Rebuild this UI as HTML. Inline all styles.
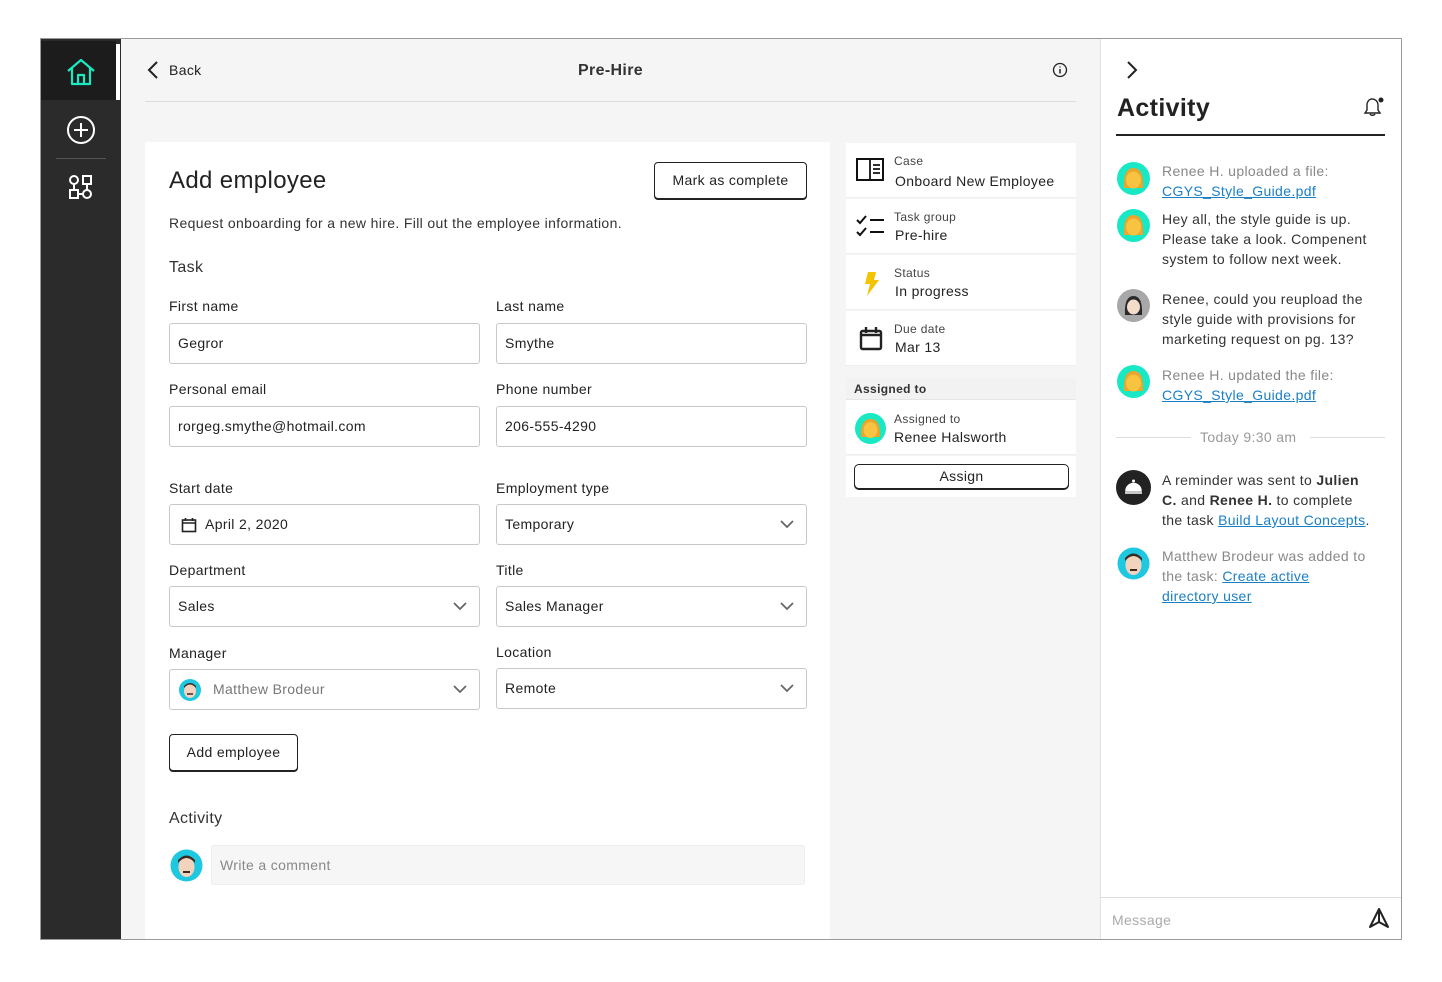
<!DOCTYPE html>
<html><head><meta charset="utf-8"><style>
*{box-sizing:border-box;margin:0;padding:0}
body{width:1442px;height:982px;background:#fff;font-family:"Liberation Sans",sans-serif;color:#222;position:relative;overflow:hidden;font-size:14px;letter-spacing:0.35px}
.a{position:absolute}
.frame{left:40px;top:38px;width:1362px;height:902px;border:1px solid #9a9a9a;background:#f5f5f5;overflow:hidden}
.lbl{font-size:14px;color:#222}
.inp{height:41px;border:1px solid #c8c8c8;border-radius:3px;background:#fff;font-size:14px;padding-left:8px;line-height:39px;color:#222}
.chev{position:absolute;right:12px;top:14px}
.btn{border:1.5px solid #222;border-radius:4px;background:#fff;font-size:14px;text-align:center;box-shadow:0 1px 0 #222}
.row{left:846px;width:230px;height:55px;background:#fff;border-bottom:1px solid #eee}
.small{font-size:12px;color:#444}
.val{font-size:14px;color:#222}
.msg{font-size:14px;line-height:20px;color:#333;width:222px}
.gray{color:#888}
.link{color:#1a7fc4;text-decoration:underline}
</style></head><body>
<div class="a frame"></div>
<!-- sidebar -->
<div class="a" style="left:41px;top:39px;width:80px;height:900px;background:#2b2b2b"></div>
<div class="a" style="left:41px;top:41px;width:75px;height:59px;background:#1c1c1c"></div>
<div class="a" style="left:116px;top:44px;width:4px;height:56px;background:#fff"></div>
<svg class="a" style="left:66px;top:58px" width="30" height="28" viewBox="0 0 30 28"><path d="M2 13 L15 2 L28 13 M6 10 V26 H24 V10 M12 26 V17 H18 V26" fill="none" stroke="#1de9c0" stroke-width="2.2" stroke-linejoin="round"/></svg>
<svg class="a" style="left:66px;top:115px" width="30" height="30"><circle cx="15" cy="15" r="13" fill="none" stroke="#fff" stroke-width="2"/><path d="M15 8v14M8 15h14" stroke="#fff" stroke-width="2"/></svg>
<div class="a" style="left:56px;top:158px;width:50px;height:1px;background:#555"></div>
<svg class="a" style="left:68px;top:174px" width="26" height="26"><circle cx="6" cy="6" r="4" fill="none" stroke="#fff" stroke-width="2"/><rect x="15" y="2" width="8" height="8" fill="none" stroke="#fff" stroke-width="2"/><rect x="2" y="16" width="8" height="8" fill="none" stroke="#fff" stroke-width="2"/><circle cx="19" cy="20" r="4" fill="none" stroke="#fff" stroke-width="2"/><path d="M6 10v6M10 20h5M19 10v6" stroke="#fff" stroke-width="2"/></svg>
<!-- header -->
<svg class="a" style="left:146px;top:60px" width="14" height="20"><path d="M11 2 L3 10 L11 18" fill="none" stroke="#222" stroke-width="2"/></svg>
<div class="a" style="left:169px;top:62px;font-size:14px">Back</div>
<div class="a" style="left:578px;top:62px;font-size:16px;font-weight:bold;color:#333">Pre-Hire</div>
<svg class="a" style="left:1052px;top:62px" width="16" height="16"><circle cx="8" cy="8" r="6.5" fill="none" stroke="#222" stroke-width="1.3"/><path d="M8 7v4.5M8 4.5v1" stroke="#222" stroke-width="1.5"/></svg>
<div class="a" style="left:145px;top:101px;width:931px;height:1px;background:#ddd"></div>
<!-- card -->
<div class="a" style="left:145px;top:142px;width:685px;height:797px;background:#fff"></div>
<div class="a" style="left:169px;top:167px;font-size:24px;color:#222">Add employee</div>
<div class="a btn" style="left:654px;top:162px;width:153px;height:37px;line-height:34px">Mark as complete</div>
<div class="a" style="left:169px;top:215px;font-size:14px;color:#333">Request onboarding for a new hire. Fill out the employee information.</div>
<div class="a" style="left:169px;top:259px;font-size:16px;color:#333">Task</div>
<div class="a lbl" style="left:169px;top:298px">First name</div>
<div class="a lbl" style="left:496px;top:298px">Last name</div>
<div class="a inp" style="left:169px;top:323px;width:311px">Gegror</div>
<div class="a inp" style="left:496px;top:323px;width:311px">Smythe</div>
<div class="a lbl" style="left:169px;top:381px">Personal email</div>
<div class="a lbl" style="left:496px;top:381px">Phone number</div>
<div class="a inp" style="left:169px;top:406px;width:311px">rorgeg.smythe@hotmail.com</div>
<div class="a inp" style="left:496px;top:406px;width:311px">206-555-4290</div>
<div class="a lbl" style="left:169px;top:480px">Start date</div>
<div class="a lbl" style="left:496px;top:480px">Employment type</div>
<div class="a inp" style="left:169px;top:504px;width:311px;padding-left:35px">April 2, 2020<svg class="a" style="left:11px;top:12px" width="16" height="16"><rect x="1.5" y="3" width="13" height="11.5" fill="none" stroke="#222" stroke-width="1.6"/><path d="M1.5 6h13M4.5 1v3M11.5 1v3" stroke="#222" stroke-width="1.6"/></svg></div>
<div class="a inp" style="left:496px;top:504px;width:311px">Temporary<svg class="chev" width="14" height="10"><path d="M1 2l6 6 6-6" fill="none" stroke="#666" stroke-width="1.8"/></svg></div>
<div class="a lbl" style="left:169px;top:562px">Department</div>
<div class="a lbl" style="left:496px;top:562px">Title</div>
<div class="a inp" style="left:169px;top:586px;width:311px">Sales<svg class="chev" width="14" height="10"><path d="M1 2l6 6 6-6" fill="none" stroke="#666" stroke-width="1.8"/></svg></div>
<div class="a inp" style="left:496px;top:586px;width:311px">Sales Manager<svg class="chev" width="14" height="10"><path d="M1 2l6 6 6-6" fill="none" stroke="#666" stroke-width="1.8"/></svg></div>
<div class="a lbl" style="left:169px;top:645px">Manager</div>
<div class="a lbl" style="left:496px;top:644px">Location</div>
<div class="a inp" style="left:169px;top:669px;width:311px;padding-left:43px;color:#777">Matthew Brodeur<svg class="a" style="left:9px;top:9px" width="22" height="22"><circle cx="11" cy="11" r="11" fill="#1ec8e0"/><ellipse cx="11" cy="12" rx="6" ry="7" fill="#f3d3bd"/><path d="M5 9 Q11 2 17 9 L17 7 Q11 1 5 7Z" fill="#3a2a20"/><path d="M8 15h6" stroke="#3a2a20" stroke-width="1.5"/></svg><svg class="chev" width="14" height="10"><path d="M1 2l6 6 6-6" fill="none" stroke="#666" stroke-width="1.8"/></svg></div>
<div class="a inp" style="left:496px;top:668px;width:311px">Remote<svg class="chev" width="14" height="10"><path d="M1 2l6 6 6-6" fill="none" stroke="#666" stroke-width="1.8"/></svg></div>
<div class="a btn" style="left:169px;top:734px;width:129px;height:37px;line-height:34px">Add employee</div>
<div class="a" style="left:169px;top:810px;font-size:16px;color:#333">Activity</div>
<svg class="a" style="left:170px;top:849px" width="33" height="33"><circle cx="16.5" cy="16.5" r="16" fill="#1ec8e0"/><ellipse cx="16.5" cy="18" rx="8" ry="10" fill="#f3d3bd"/><path d="M8 14 Q16.5 4 25 14 L25 11 Q16.5 2 8 11Z" fill="#3a2a20"/><path d="M13 23h7" stroke="#3a2a20" stroke-width="2"/></svg>
<div class="a" style="left:211px;top:845px;width:594px;height:40px;background:#f6f6f6;border:1px solid #eee;border-radius:3px;padding-left:8px;line-height:38px;color:#888">Write a comment</div>
<!-- info panel -->
<div class="a row" style="top:143px"></div>
<svg class="a" style="left:856px;top:158px" width="28" height="24"><rect x="1" y="1" width="26" height="21" fill="none" stroke="#111" stroke-width="2"/><path d="M14 1v21M17 7h7M17 11h7M17 15h7" stroke="#111" stroke-width="1.8"/></svg>
<div class="a small" style="left:894px;top:154px">Case</div><div class="a val" style="left:895px;top:173px">Onboard New Employee</div>
<div class="a row" style="top:199px"></div>
<svg class="a" style="left:856px;top:213px" width="30" height="26"><path d="M1 7l3 3 6-7M1 19l3 3 6-7M14 7h14M14 19h14" fill="none" stroke="#111" stroke-width="2"/></svg>
<div class="a small" style="left:894px;top:210px">Task group</div><div class="a val" style="left:895px;top:227px">Pre-hire</div>
<div class="a row" style="top:255px"></div>
<svg class="a" style="left:862px;top:271px" width="18" height="26"><path d="M6 1h8l-2 8h5L5 25l3-12H3Z" fill="#f5c400"/></svg>
<div class="a small" style="left:894px;top:266px">Status</div><div class="a val" style="left:895px;top:283px">In progress</div>
<div class="a row" style="top:311px"></div>
<svg class="a" style="left:859px;top:326px" width="24" height="26"><rect x="2" y="5" width="20" height="18" rx="1.5" fill="none" stroke="#222" stroke-width="2.4"/><path d="M2 9h20M7 1v6M17 1v6" stroke="#222" stroke-width="2.4"/></svg>
<div class="a small" style="left:894px;top:322px">Due date</div><div class="a val" style="left:895px;top:339px">Mar 13</div>
<div class="a" style="left:846px;top:378px;width:230px;height:22px;background:#f2f2f2;border-bottom:1px solid #e6e6e6;font-size:12px;font-weight:bold;color:#333;padding:4px 8px">Assigned to</div>
<div class="a row" style="top:400px"></div>
<svg class="a" style="left:855px;top:413px" width="31" height="31"><circle cx="15.5" cy="15.5" r="15.5" fill="#19e8c4"/><path d="M6 24 Q5 6 15.5 6 Q26 6 25 24Z" fill="#e9a52c"/><ellipse cx="15.5" cy="17" rx="7" ry="8" fill="#f7c341"/></svg>
<div class="a small" style="left:894px;top:412px">Assigned to</div><div class="a val" style="left:894px;top:429px">Renee Halsworth</div>
<div class="a" style="left:846px;top:456px;width:230px;height:41px;background:#fff"></div>
<div class="a btn" style="left:854px;top:464px;width:215px;height:25px;line-height:22px;border-radius:5px">Assign</div>
<!-- activity panel -->
<div class="a" style="left:1100px;top:39px;width:301px;height:900px;background:#fff;border-left:1px solid #e2e2e2"></div>
<svg class="a" style="left:1125px;top:60px" width="14" height="20"><path d="M3 2 L11 10 L3 18" fill="none" stroke="#222" stroke-width="2"/></svg>
<div class="a" style="left:1117px;top:94px;font-size:25px;font-weight:bold;color:#222">Activity</div>
<svg class="a" style="left:1361px;top:95px" width="24" height="24"><path d="M4 18h15l-2-3v-5a6 6 0 0 0-7-6 6 6 0 0 0-4 6v5z" fill="none" stroke="#222" stroke-width="1.4"/><path d="M9 19a3 3 0 0 0 5 0" fill="none" stroke="#222" stroke-width="1.4"/><circle cx="20" cy="5" r="2.5" fill="#222"/></svg>
<div class="a" style="left:1116px;top:134px;width:269px;height:2px;background:#222"></div>

<svg class="a" style="left:1117px;top:162px" width="33" height="33"><circle cx="16.5" cy="16.5" r="16.5" fill="#19e8c4"/><path d="M7 26 Q6 6 16.5 6 Q27 6 26 26Z" fill="#e9a52c"/><ellipse cx="16.5" cy="18" rx="7.5" ry="8.5" fill="#f7c341"/></svg>
<div class="a msg gray" style="left:1162px;top:161px">Renee H. uploaded a file:<br><span class="link">CGYS_Style_Guide.pdf</span></div>
<svg class="a" style="left:1117px;top:209px" width="33" height="33"><circle cx="16.5" cy="16.5" r="16.5" fill="#19e8c4"/><path d="M7 26 Q6 6 16.5 6 Q27 6 26 26Z" fill="#e9a52c"/><ellipse cx="16.5" cy="18" rx="7.5" ry="8.5" fill="#f7c341"/></svg>
<div class="a msg" style="left:1162px;top:209px">Hey all, the style guide is up.<br>Please take a look. Compenent<br>system to follow next week.</div>
<svg class="a" style="left:1117px;top:289px" width="33" height="33"><circle cx="16.5" cy="16.5" r="16.5" fill="#a8a8a8"/><path d="M8 26 Q7 7 16.5 7 Q26 7 25 26Z" fill="#2a2a2a"/><ellipse cx="16.5" cy="18" rx="6.5" ry="7.5" fill="#f4dccb"/></svg>
<div class="a msg" style="left:1162px;top:289px">Renee, could you reupload the<br>style guide with provisions for<br>marketing request on pg. 13?</div>
<svg class="a" style="left:1117px;top:365px" width="33" height="33"><circle cx="16.5" cy="16.5" r="16.5" fill="#19e8c4"/><path d="M7 26 Q6 6 16.5 6 Q27 6 26 26Z" fill="#e9a52c"/><ellipse cx="16.5" cy="18" rx="7.5" ry="8.5" fill="#f7c341"/></svg>
<div class="a msg gray" style="left:1162px;top:365px">Renee H. updated the file:<br><span class="link">CGYS_Style_Guide.pdf</span></div>
<div class="a" style="left:1116px;top:437px;width:75px;height:1px;background:#ddd"></div>
<div class="a" style="left:1310px;top:437px;width:75px;height:1px;background:#ddd"></div>
<div class="a" style="left:1200px;top:429px;font-size:14px;color:#999">Today 9:30 am</div>
<svg class="a" style="left:1116px;top:470px" width="35" height="35"><circle cx="17.5" cy="17.5" r="17.5" fill="#222"/><path d="M9 23h17M10 21a7.5 7.5 0 0 1 15 0z" fill="#fff" stroke="#fff" stroke-width="1.5"/><circle cx="17.5" cy="11" r="1.5" fill="#fff"/></svg>
<div class="a msg" style="left:1162px;top:470px">A reminder was sent to <b>Julien</b><br><b>C.</b> and <b>Renee H.</b> to complete<br>the task <span class="link">Build Layout Concepts</span>.</div>
<svg class="a" style="left:1117px;top:547px" width="33" height="33"><circle cx="16.5" cy="16.5" r="16" fill="#1ec8e0"/><ellipse cx="16.5" cy="18" rx="8" ry="10" fill="#f3d3bd"/><path d="M8 14 Q16.5 4 25 14 L25 11 Q16.5 2 8 11Z" fill="#3a2a20"/><path d="M13 23h7" stroke="#3a2a20" stroke-width="2"/></svg>
<div class="a msg gray" style="left:1162px;top:546px">Matthew Brodeur was added to<br>the task: <span class="link">Create active</span><br><span class="link">directory user</span></div>
<div class="a" style="left:1101px;top:897px;width:300px;height:1px;background:#ddd"></div>
<div class="a" style="left:1112px;top:912px;font-size:14px;color:#aaa">Message</div>
<svg class="a" style="left:1368px;top:907px" width="22" height="22"><path d="M11 2 L20 20 L11 15 L2 20Z M11 2V15" fill="none" stroke="#222" stroke-width="2" stroke-linejoin="round"/></svg>
</body></html>
